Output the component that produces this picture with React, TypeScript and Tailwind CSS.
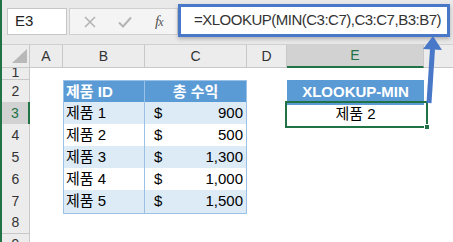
import React from "react";

const COLS = "grid grid-cols-[28px_33px_82px_102px_40px_137px_1fr]";
const FONT = "font-['Liberation_Sans','Noto_Sans_CJK_KR',sans-serif]";

function RowHead({ n, sel = false }: { n: string; sel?: boolean }) {
  return (
    <div
      className={
        "flex items-center justify-center border-b border-[#c8c8c8] text-[14px] " +
        (sel
          ? "bg-[#d2d2d2] text-[#217346] border-r-2 border-r-[#217346]"
          : "bg-[#ececec] text-[#333] border-r border-r-[#c8c8c8]")
      }
    >
      {n}
    </div>
  );
}

const data = [
  { id: "제품 1", v: "900", light: true },
  { id: "제품 2", v: "500", light: false },
  { id: "제품 3", v: "1,300", light: true },
  { id: "제품 4", v: "1,000", light: false },
  { id: "제품 5", v: "1,500", light: true },
];

export default function App() {
  return (
    <div
      className={
        "relative w-[453px] h-[242px] overflow-hidden bg-white border-l-2 border-[#217346] " +
        FONT
      }
    >
      {/* formula bar */}
      <div className="flex items-start h-[45px] bg-[#e9e9e9] border-b border-[#d0d0d0] pl-[5px]">
        <div className="mt-[8px] w-[60px] h-[27px] bg-white border border-[#c6c6c6] flex items-center pl-[7px] text-[15px] text-[#222]">
          E3
        </div>
        <div className="mt-[8px] ml-[2px] w-[109px] h-[27px] bg-[#f4f4f4] border border-[#d0d0d0] flex items-center">
          <svg className="ml-[14px]" width="12" height="12" viewBox="0 0 12 12">
            <path d="M1 1 L11 11 M11 1 L1 11" stroke="#b4b4b4" strokeWidth="1.6" fill="none" />
          </svg>
          <svg className="ml-[22px]" width="14" height="12" viewBox="0 0 14 12">
            <path d="M1 6.5 L5 10.5 L13 1.5" stroke="#b4b4b4" strokeWidth="2" fill="none" />
          </svg>
          <span className="ml-[23px] font-['Liberation_Serif',serif] italic text-[15px] text-[#555] tracking-[-1px]">
            f<span className="text-[12px]">x</span>
          </span>
        </div>
        <div className="mt-[4px] mr-[3px] flex-1 h-[33px] bg-white border-[3px] border-[#4a78c8] shadow-[0_2px_4px_rgba(0,0,0,0.25)] flex items-center pl-[13px] text-[15px] tracking-[-0.5px] text-[#333] whitespace-nowrap overflow-hidden">
          =XLOOKUP(MIN(C3:C7),C3:C7,B3:B7)
        </div>
      </div>

      {/* column headers */}
      <div className={COLS + " h-[23px] text-[14px] text-[#333]"}>
        <div className="relative bg-[#ececec] border-r border-b border-[#c8c8c8]">
          <svg className="absolute right-[2px] bottom-[4px]" width="15" height="14" viewBox="0 0 15 14">
            <path d="M15 0 L15 14 L0 14 Z" fill="#b8b8b8" />
          </svg>
        </div>
        {["A", "B", "C", "D"].map((c) => (
          <div key={c} className="flex items-center justify-center bg-[#ececec] border-r border-b border-[#c8c8c8]">
            {c}
          </div>
        ))}
        <div className="flex items-center justify-center bg-[#d2d2d2] border-r border-[#c8c8c8] border-b-2 border-b-[#217346] text-[#217346]">
          E
        </div>
        <div className="bg-[#ececec] border-b border-[#c8c8c8]" />
      </div>

      {/* row 1 (partially hidden) */}
      <div className={COLS + " h-[12px]"}>
        <div className="flex justify-center items-end overflow-hidden bg-[#ececec] border-r border-b border-[#c8c8c8] text-[14px] text-[#333] leading-[14px]">
          1
        </div>
      </div>

      {/* row 2 header */}
      <div className={COLS + " h-[22px]"}>
        <RowHead n="2" />
        <div />
        <div className="flex items-center pl-[2px] bg-[#5b9bd5] border border-[#9bc2e6] text-white font-bold text-[15px]">
          제품 ID
        </div>
        <div className="flex items-center justify-center bg-[#5b9bd5] border-t border-r border-b border-[#9bc2e6] text-white font-bold text-[15px]">
          총 수익
        </div>
        <div />
        <div className="flex items-center justify-center bg-[#5b9bd5] text-white font-bold text-[15px]">
          XLOOKUP-MIN
        </div>
        <div />
      </div>

      {data.map((r, i) => (
        <div key={r.id} className={COLS + " h-[22px]"}>
          <RowHead n={String(i + 3)} sel={i === 0} />
          <div />
          <div
            className={
              "flex items-center pl-[2px] border-l border-r border-b border-[#9bc2e6] text-[15px] text-black " +
              (r.light ? "bg-[#ddebf7]" : "bg-white")
            }
          >
            {r.id}
          </div>
          <div
            className={
              "flex items-center justify-between pl-[9px] pr-[3px] border-r border-b border-[#9bc2e6] text-[15px] text-black " +
              (r.light ? "bg-[#ddebf7]" : "bg-white")
            }
          >
            <span>$</span>
            <span>{r.v}</span>
          </div>
          <div />
          {i === 0 ? (
            <div className="relative flex items-center justify-center text-[15px] text-black">
              제품 2
              <div className="absolute -left-[2px] -top-[1px] -right-[4px] -bottom-[2px] border-2 border-[#217346]">
                <div className="absolute -right-[4px] -bottom-[4px] w-[6px] h-[6px] bg-[#217346] border border-white" />
              </div>
            </div>
          ) : (
            <div />
          )}
          <div />
        </div>
      ))}

      {[8, 9].map((n) => (
        <div key={n} className={COLS + " h-[22px]"}>
          <RowHead n={String(n)} />
        </div>
      ))}

      {/* annotation arrow */}
      <svg className="absolute left-[418px] top-[35px]" width="24" height="72" viewBox="0 0 24 72">
        <path d="M12.5 14 L9 68" stroke="#4a78c8" strokeWidth="5" fill="none" />
        <path d="M13 1 L22 15 L3 14 Z" fill="#4a78c8" />
      </svg>
    </div>
  );
}
